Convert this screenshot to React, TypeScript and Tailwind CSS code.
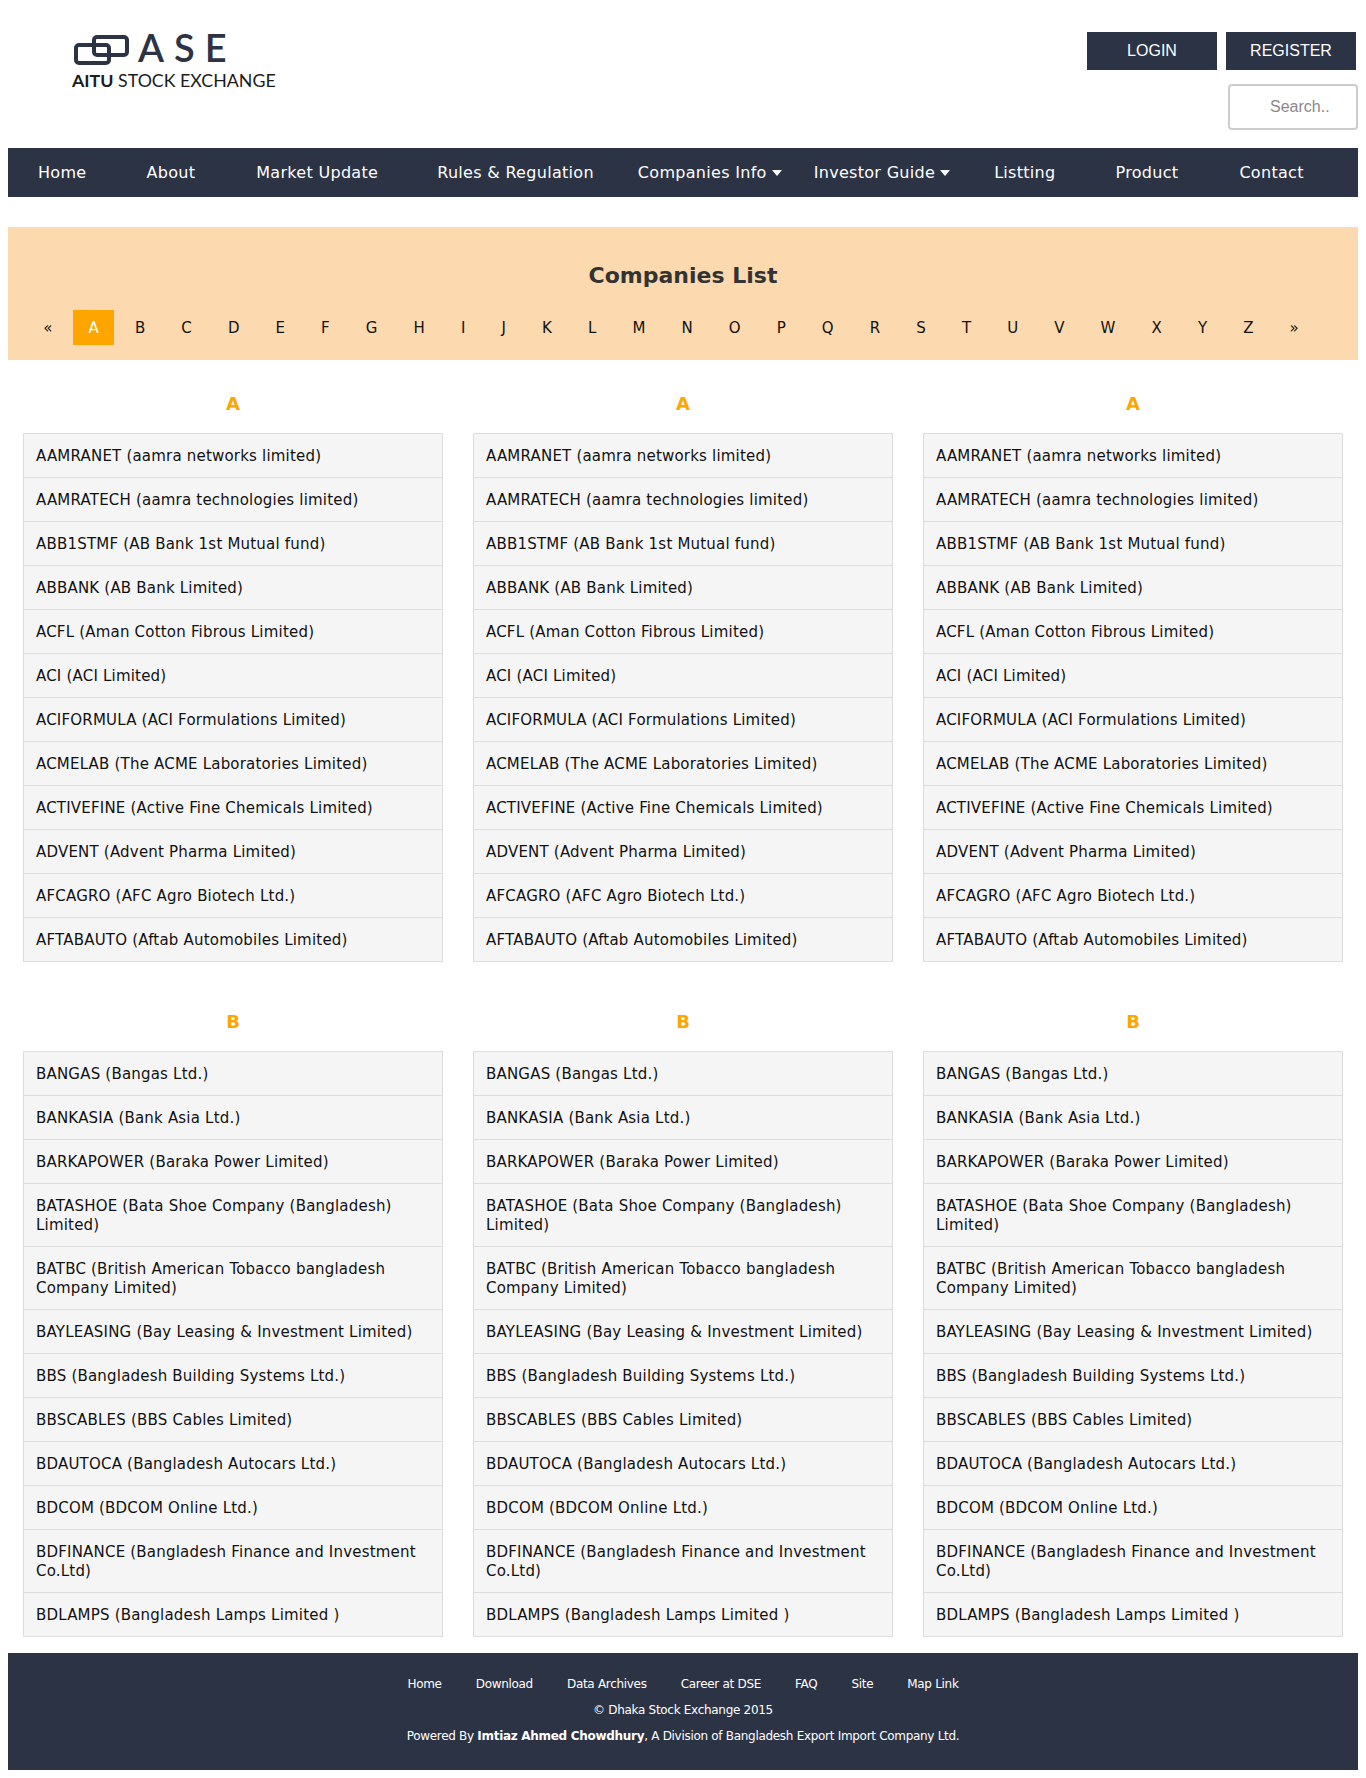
const NAV = [
  { label: "Home", gap: "mr-[60px]" },
  { label: "About", gap: "mr-[61px]" },
  { label: "Market Update", gap: "mr-[59px]" },
  { label: "Rules & Regulation", gap: "mr-[44px]" },
  { label: "Companies Info", gap: "mr-[32px]", caret: true },
  { label: "Investor Guide", gap: "mr-[44px]", caret: true },
  { label: "Listting", gap: "mr-[60px]" },
  { label: "Product", gap: "mr-[61px]" },
  { label: "Contact", gap: "" },
];

const LETTERS = "«ABCDEFGHIJKLMNOPQRSTUVWXYZ»".split("");

const GROUP_A = [
  "AAMRANET (aamra networks limited)",
  "AAMRATECH (aamra technologies limited)",
  "ABB1STMF (AB Bank 1st Mutual fund)",
  "ABBANK (AB Bank Limited)",
  "ACFL (Aman Cotton Fibrous Limited)",
  "ACI (ACI Limited)",
  "ACIFORMULA (ACI Formulations Limited)",
  "ACMELAB (The ACME Laboratories Limited)",
  "ACTIVEFINE (Active Fine Chemicals Limited)",
  "ADVENT (Advent Pharma Limited)",
  "AFCAGRO (AFC Agro Biotech Ltd.)",
  "AFTABAUTO (Aftab Automobiles Limited)",
];

const GROUP_B = [
  "BANGAS (Bangas Ltd.)",
  "BANKASIA (Bank Asia Ltd.)",
  "BARKAPOWER (Baraka Power Limited)",
  "BATASHOE (Bata Shoe Company (Bangladesh) Limited)",
  "BATBC (British American Tobacco bangladesh Company Limited)",
  "BAYLEASING (Bay Leasing & Investment Limited)",
  "BBS (Bangladesh Building Systems Ltd.)",
  "BBSCABLES (BBS Cables Limited)",
  "BDAUTOCA (Bangladesh Autocars Ltd.)",
  "BDCOM (BDCOM Online Ltd.)",
  "BDFINANCE (Bangladesh Finance and Investment Co.Ltd)",
  "BDLAMPS (Bangladesh Lamps Limited )",
];

const FOOTER_LINKS = ["Home", "Download", "Data Archives", "Career at DSE", "FAQ", "Site", "Map Link"];

function Logo() {
  return (
    <div className="ml-[64px] mt-[28px] w-[220px] text-[#2c3345]">
      <div className="flex items-center h-[38px]">
        <svg width="64" height="34" viewBox="0 0 64 34" className="mt-[3px] mr-[2px] shrink-0" fill="none" stroke="#2c3345" strokeWidth="4">
          <rect x="22" y="5" width="33" height="18" rx="3" />
          <rect x="4" y="13" width="33" height="18" rx="3" />
        </svg>
        <span className="font-['Lato',sans-serif] font-semibold text-[38px] leading-none tracking-[10px]">ASE</span>
      </div>
      <div className="font-['Lato',sans-serif] text-[17.8px] leading-[22px] text-[#1c1c1c] whitespace-nowrap mt-[3px]">
        <span className="font-bold">AITU</span> STOCK EXCHANGE
      </div>
    </div>
  );
}

function CompanyList({ title, items }: { title: string; items: string[] }) {
  return (
    <div className="w-[420px]">
      <h4 className="text-center text-[18px] leading-[20px] font-bold text-[#ffa500] mb-[19px]">{title}</h4>
      <ul>
        {items.map((item) => (
          <li
            key={item}
            className="bg-[#f5f5f5] border border-[#dddddd] -mt-px first:mt-0 px-[12px] pt-[13px] pb-[11px] text-[15px] tracking-[0.2px] leading-[19px] text-[#111111]"
          >
            {item}
          </li>
        ))}
      </ul>
    </div>
  );
}

export default function App() {
  return (
    <div className="w-[1366px] h-[1778px] bg-white font-['DejaVu_Sans',sans-serif] px-[8px] overflow-hidden">
      <header className="flex justify-between h-[148px]">
        <Logo />
        <div className="flex flex-col items-end font-['Liberation_Sans',sans-serif]">
          <div className="flex gap-[9px] mt-[32px] mr-[2px]">
            <button className="w-[130px] h-[38px] bg-[#2c3345] text-white text-[16px]">LOGIN</button>
            <button className="w-[130px] h-[38px] bg-[#2c3345] text-white text-[16px]">REGISTER</button>
          </div>
          <input
            placeholder="Search.."
            className="mt-[14px] w-[130px] h-[46px] border-2 border-[#cccccc] rounded-[4px] pl-[40px] text-[16px] placeholder:text-[#8a8a8a] bg-white"
          />
        </div>
      </header>

      <nav className="h-[49px] bg-[#2c3345] flex items-center pl-[30px] text-white text-[16px] tracking-[0.3px] whitespace-nowrap">
        {NAV.map((n) => (
          <a key={n.label} className={`flex items-center ${n.gap}`}>
            {n.label}
            {n.caret && <span className="ml-[5px] w-0 h-0 border-x-[5.5px] border-x-transparent border-t-[6px] border-t-white" />}
          </a>
        ))}
      </nav>

      <section className="mt-[30px] h-[133px] bg-[#fcd9ae] pt-[35px]">
        <h2 className="text-center text-[22px] leading-[28px] font-bold text-[#333333]">Companies List</h2>
        <div className="mt-[20px] flex justify-center gap-[5.1px] pr-[24px]">
          {LETTERS.map((l) => (
            <a
              key={l}
              className={
                l === "A"
                  ? "h-[35px] px-[15.5px] text-[15px] leading-[36px] bg-[#ffa500] text-white"
                  : "h-[35px] px-[15.5px] text-[15px] leading-[36px] text-[#111111]"
              }
            >
              {l}
            </a>
          ))}
        </div>
      </section>

      <section className="mt-[34px] px-[15px] flex justify-between">
        <CompanyList title="A" items={GROUP_A} />
        <CompanyList title="A" items={GROUP_A} />
        <CompanyList title="A" items={GROUP_A} />
      </section>

      <section className="mt-[50px] px-[15px] flex justify-between">
        <CompanyList title="B" items={GROUP_B} />
        <CompanyList title="B" items={GROUP_B} />
        <CompanyList title="B" items={GROUP_B} />
      </section>

      <footer className="mt-[16px] h-[117px] bg-[#2c3345] text-white text-[12px] tracking-[-0.3px] text-center pt-[22px]">
        <div className="flex justify-center gap-[34px] leading-[18px]">
          {FOOTER_LINKS.map((l) => (
            <a key={l}>{l}</a>
          ))}
        </div>
        <p className="mt-[8px] leading-[18px]">© Dhaka Stock Exchange 2015</p>
        <p className="mt-[8px] leading-[18px]">
          Powered By <b>Imtiaz Ahmed Chowdhury</b>, A Division of Bangladesh Export Import Company Ltd.
        </p>
      </footer>
    </div>
  );
}
